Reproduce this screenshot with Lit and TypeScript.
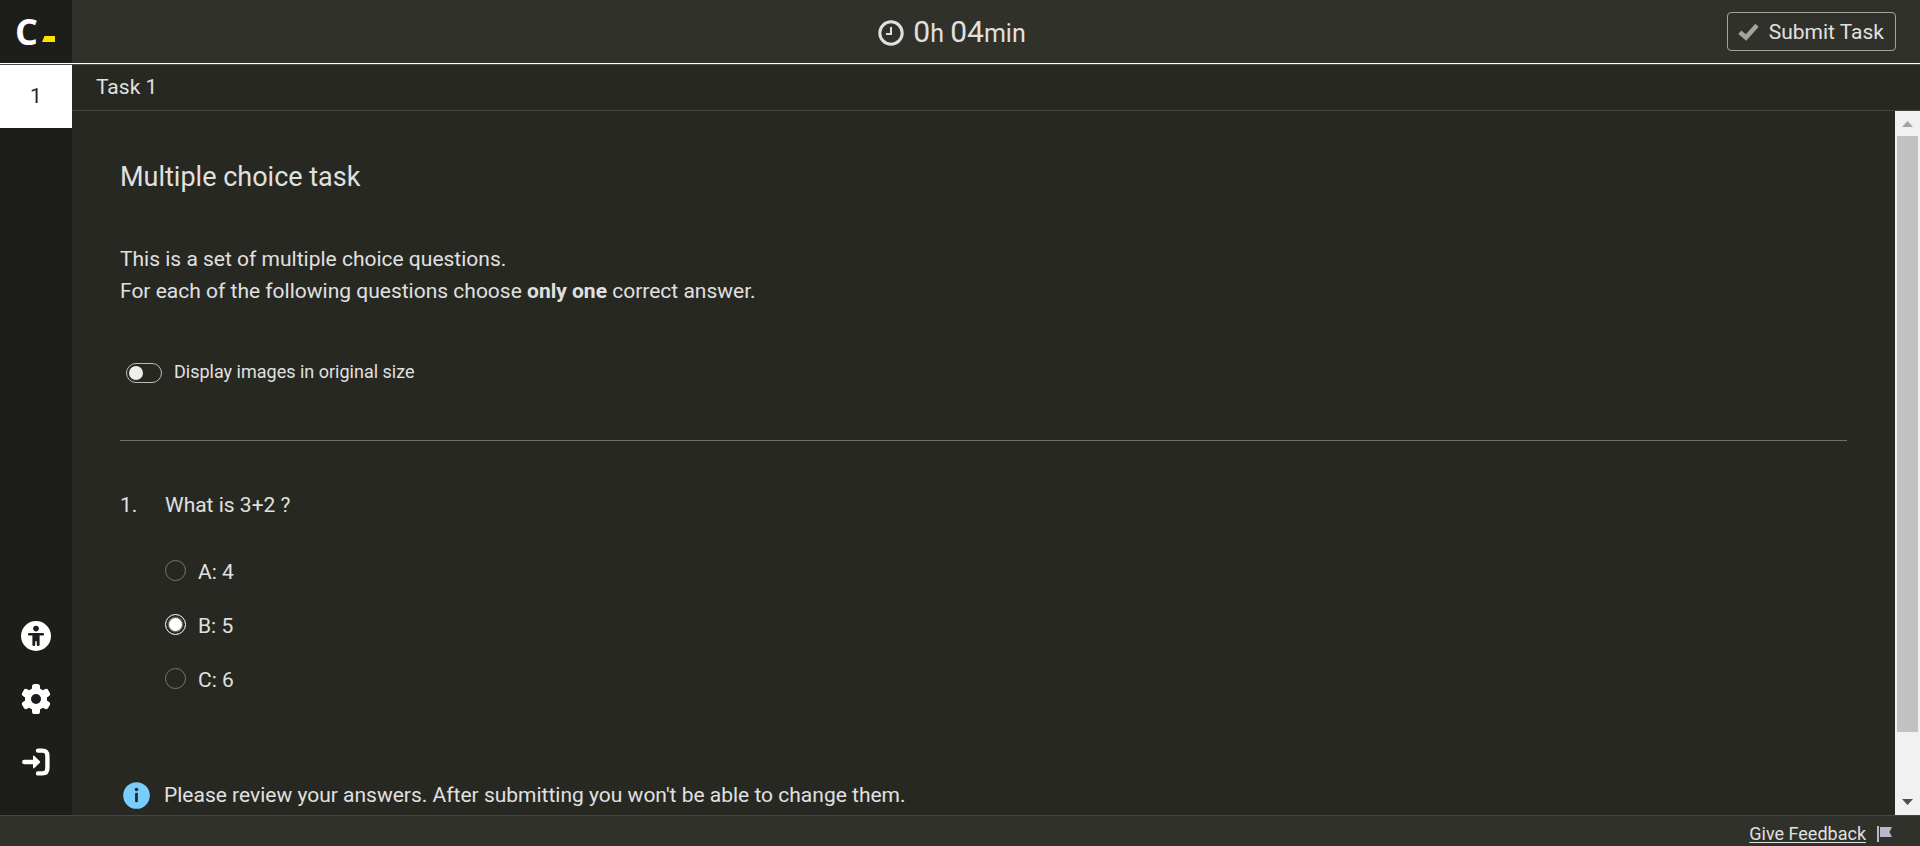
import { LitElement, html, css, svg } from "lit";
import { customElement, state } from "lit/decorators.js";

const gearTooth = (angle: number) =>
  svg`<rect x="11" y="0" width="8" height="8" rx="2.6" transform="rotate(${angle} 15 15)" />`;

@customElement("app-root")
export class AppRoot extends LitElement {
  static styles = css`
    :host {
      display: flex;
      flex-direction: column;
      height: 100vh;
      overflow: hidden;
      background: #272822;
      color: #e0e0e0;
      font: 21px/32px Roboto, sans-serif;
    }
    * {
      box-sizing: border-box;
    }
    svg {
      display: block;
      flex: none;
    }
    button {
      font: inherit;
      color: inherit;
      background: none;
      border: 0;
      padding: 0;
      margin: 0;
      cursor: pointer;
    }
    .header {
      flex: none;
      display: grid;
      grid-template-columns: 72px 1fr auto 1fr;
      height: 65px;
      background: #30312a;
      border-bottom: 1px solid #4a4a46;
      box-shadow: inset 0 -1px #fff;
    }
    .brand {
      display: flex;
      align-items: center;
      height: 63px;
      padding-left: 15px;
      background: #1d1e19;
      color: #fff;
      font: 700 36px/63px "Open Sans", sans-serif;
      text-decoration: none;
    }
    .letter {
      width: 27px;
    }
    .cursor {
      align-self: flex-end;
      margin-bottom: 21px;
    }
    .timer {
      grid-column: 3;
      display: flex;
      align-items: center;
      gap: 9px;
      height: 65px;
      margin-right: 88px;
      font-size: 25px;
    }
    .timer b {
      font-weight: 400;
      font-size: 30px;
    }
    .actions {
      display: flex;
      align-items: center;
      justify-content: flex-end;
      height: 63px;
      padding-right: 24px;
    }
    .submit {
      display: flex;
      align-items: center;
      gap: 10px;
      height: 39px;
      padding: 0 11px 0 10px;
      border: 1px solid #a3a3a0;
      border-radius: 4px;
    }
    .body {
      flex: 1;
      display: flex;
      min-height: 0;
    }
    .sidebar {
      flex: none;
      display: flex;
      flex-direction: column;
      justify-content: space-between;
      width: 72px;
      padding-bottom: 22px;
      background: #1d1e19;
      color: #fff;
    }
    .tab {
      width: 100%;
      height: 63px;
      padding-bottom: 2px;
      background: #fff;
      color: #272822;
    }
    .tool {
      display: flex;
      align-items: center;
      justify-content: center;
      width: 100%;
      height: 63px;
    }
    .main {
      flex: 1;
      display: flex;
      flex-direction: column;
      min-width: 0;
    }
    .crumb {
      flex: none;
      height: 46px;
      padding: 6px 24px;
      border-bottom: 1px solid #464742;
    }
    .viewport {
      flex: 1;
      display: flex;
      min-height: 0;
    }
    .content {
      flex: 1;
      min-width: 0;
      overflow: hidden;
      padding: 48px;
    }
    h1 {
      margin: 0;
      font-size: 27px;
      line-height: 36px;
      font-weight: 400;
    }
    p {
      margin: 0;
    }
    .intro {
      margin-top: 48px;
    }
    .switch {
      display: flex;
      align-items: center;
      gap: 12px;
      width: max-content;
      margin: 48px 0 0 6px;
      font-size: 18px;
      line-height: 34px;
    }
    .switch input {
      appearance: none;
      display: flex;
      align-items: center;
      width: 36px;
      height: 20px;
      margin: 2px 0 0;
      padding: 2px;
      border: 1px solid #bdbdb8;
      border-radius: 10px;
    }
    .switch input::before {
      content: "";
      width: 14px;
      height: 14px;
      border-radius: 50%;
      background: #eee;
    }
    .switch input:checked {
      justify-content: flex-end;
    }
    hr {
      height: 1px;
      margin: 51px 0 48px;
      border: 0;
      background: #6f706b;
    }
    fieldset {
      display: grid;
      grid-template-columns: 45px 1fr;
      margin: 0;
      padding: 0;
      border: 0;
    }
    .options {
      grid-column: 2;
      display: grid;
      gap: 22px;
      justify-items: start;
      margin-top: 35px;
    }
    .option {
      display: flex;
      align-items: center;
      gap: 12px;
    }
    .option input {
      appearance: none;
      display: grid;
      place-items: center;
      width: 21px;
      height: 21px;
      margin: 0 0 4px;
      border: 1px solid #777873;
      border-radius: 50%;
    }
    .option input:checked {
      border-color: #fff;
    }
    .option input:checked::before {
      content: "";
      width: 13px;
      height: 13px;
      border-radius: 50%;
      background: #fff;
      box-shadow: 0 0 1px 1px rgba(255, 255, 255, 0.4);
    }
    .note {
      display: flex;
      align-items: center;
      gap: 14px;
      margin-top: 83px;
      padding-left: 3px;
    }
    .scrollbar {
      flex: none;
      display: flex;
      flex-direction: column;
      align-items: center;
      width: 25px;
      background: #f1f1f1;
    }
    .thumb {
      flex: 1;
      width: 21px;
      margin-bottom: 58px;
      background: #c1c1c1;
    }
    .footer {
      flex: none;
      display: flex;
      align-items: center;
      justify-content: flex-end;
      gap: 11px;
      height: 31px;
      padding: 6px 28px 0 0;
      background: #30312a;
      border-top: 1px solid #464742;
      font-size: 18px;
      line-height: 24px;
    }
    .footer a {
      color: inherit;
      text-underline-offset: 2px;
    }
  `;

  @state() private selected = "B";

  private answers = [
    { key: "A", value: "4" },
    { key: "B", value: "5" },
    { key: "C", value: "6" },
  ];

  render() {
    return html`
      <header class="header">
        <a class="brand" href="#" aria-label="Home">
          <span class="letter">C</span>
          <svg class="cursor" width="14" height="6" viewBox="0 0 14 6">
            <path d="M2.5 0H13v6H0z" fill="#ffe300" />
          </svg>
        </a>
        <div class="timer">
          <svg width="26" height="26" viewBox="0 0 26 26" fill="none" stroke="#e0e0e0">
            <circle cx="13" cy="13" r="11.2" stroke-width="3" />
            <path d="M13 7v7H8" stroke-width="2" />
          </svg>
          <span><b>0</b>h <b>04</b>min</span>
        </div>
        <div class="actions">
          <button class="submit">
            <svg width="21" height="18" viewBox="0 0 21 18" fill="none" stroke="#a3a3a0" stroke-width="4.6">
              <path d="M1.8 9.2 8 14.6 19 2.2" stroke-linejoin="miter" />
            </svg>
            Submit Task
          </button>
        </div>
      </header>
      <div class="body">
        <nav class="sidebar">
          <button class="tab">1</button>
          <div>
            <button class="tool" aria-label="Accessibility">
              <svg width="30" height="30" viewBox="0 0 30 30">
                <circle cx="15" cy="15" r="15" fill="#fff" />
                <g fill="#1d1e19">
                  <circle cx="15" cy="7.6" r="2.8" />
                  <path d="M8 12h14q1 0 1 1.2t-1 1.2h-3.4V24q0 .9-1.4.9t-1.4-.9v-3.7h-1.6V24q0 .9-1.4.9t-1.4-.9v-9.6H8q-1 0-1-1.2T8 12z" />
                </g>
              </svg>
            </button>
            <button class="tool" aria-label="Settings">
              <svg width="30" height="30" viewBox="0 0 30 30" fill="#fff">
                <circle cx="15" cy="15" r="11" />
                ${[0, 60, 120, 180, 240, 300].map(gearTooth)}
                <circle cx="15" cy="15" r="5" fill="#1d1e19" />
              </svg>
            </button>
            <button class="tool" aria-label="Exit">
              <svg width="28" height="28" viewBox="0 0 28 28">
                <path d="M16 2.6h4.5Q25.4 2.6 25.4 8v12q0 5.4-4.9 5.4H16" fill="none" stroke="#fff" stroke-width="4.4" stroke-linecap="round" />
                <path d="M2.3 11.8h8.7V8.6q0-1.8 1.4-.6l5.4 5.2q.8.8 0 1.6l-5.4 5.2q-1.4 1.2-1.4-.6v-3.2H2.3a2.2 2.2 0 0 1 0-4.4z" fill="#fff" />
              </svg>
            </button>
          </div>
        </nav>
        <main class="main">
          <div class="crumb">Task 1</div>
          <div class="viewport">
            <div class="content">
              <h1>Multiple choice task</h1>
              <p class="intro">
                This is a set of multiple choice questions.<br />
                For each of the following questions choose <strong>only one</strong> correct answer.
              </p>
              <label class="switch"><input type="checkbox" role="switch" />Display images in original size</label>
              <hr />
              <fieldset aria-labelledby="q1">
                <span>1.</span>
                <span id="q1">What is 3+2 ?</span>
                <div class="options">
                  ${this.answers.map(
                    (a) => html`<label class="option"
                      ><input
                        type="radio"
                        name="q1"
                        .checked=${this.selected === a.key}
                        @change=${() => (this.selected = a.key)}
                      />${a.key}: ${a.value}</label
                    >`
                  )}
                </div>
              </fieldset>
              <p class="note">
                <svg width="27" height="27" viewBox="0 0 27 27">
                  <circle cx="13.5" cy="13.5" r="13.3" fill="#78cdfd" />
                  <g fill="#272822">
                    <circle cx="13.5" cy="7.5" r="1.8" />
                    <rect x="12.1" y="10.8" width="2.8" height="9.4" rx="1" />
                  </g>
                </svg>
                Please review your answers. After submitting you won't be able to change them.
              </p>
            </div>
            <div class="scrollbar" aria-hidden="true">
              <svg width="25" height="25" viewBox="0 0 25 25"><path d="M12.5 10 18 16H7z" fill="#a3a3a3" /></svg>
              <div class="thumb"></div>
              <svg width="25" height="25" viewBox="0 0 25 25"><path d="M12.5 15 18 9H7z" fill="#505050" /></svg>
            </div>
          </div>
        </main>
      </div>
      <footer class="footer">
        <a href="#">Give Feedback</a>
        <svg width="15" height="16" viewBox="0 0 15 16" fill="#b4bac6">
          <path d="M0 0h2v16H0zM3 1h12l-2.6 5L15 11H3z" />
        </svg>
      </footer>
    `;
  }
}
